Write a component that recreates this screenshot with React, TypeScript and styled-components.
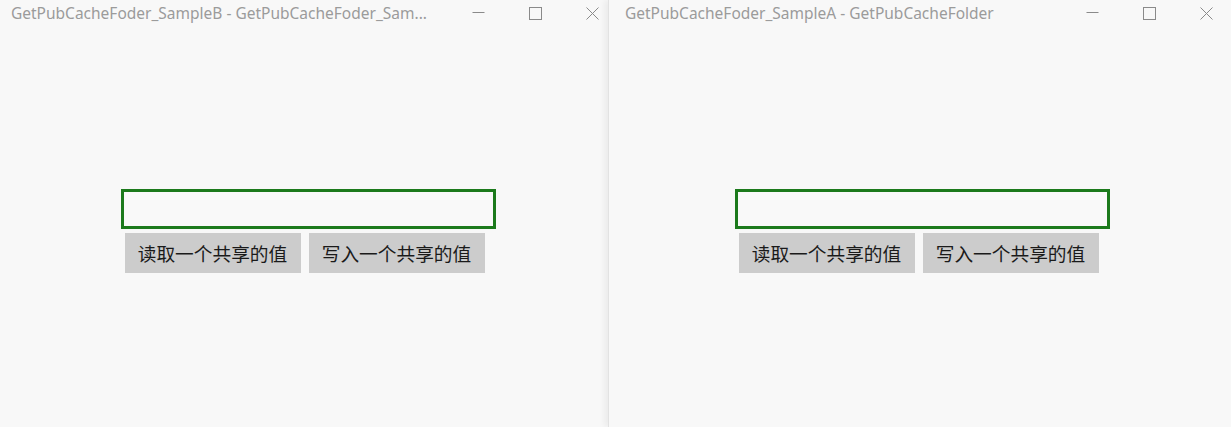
import React from "react";
import styled, { createGlobalStyle } from "styled-components";

const Global = createGlobalStyle`
  html, body { margin: 0; padding: 0; background: #f8f8f8; }
  body { width: 1231px; height: 427px; overflow: hidden; }
  #root { width: 1231px; height: 427px; }
`;

const Desktop = styled.div`
  display: flex;
  width: 1231px;
  height: 427px;
  overflow: hidden;
  background: #f8f8f8;
`;

const Window = styled.div<{ $front?: boolean }>`
  position: relative;
  box-sizing: border-box;
  flex: 0 0 auto;
  width: ${(p) => (p.$front ? "627px" : "621px")};
  height: 427px;
  display: flex;
  flex-direction: column;
  background: #f8f8f8;
  margin-right: ${(p) => (p.$front ? "0" : "-13px")};
  padding-left: ${(p) => (p.$front ? "5px" : "0")};
  z-index: ${(p) => (p.$front ? 1 : 0)};
  border-left: ${(p) => (p.$front ? "1px solid #e2e2e2" : "none")};
  box-shadow: ${(p) => (p.$front ? "-4px 0 6px rgba(0,0,0,0.05)" : "none")};
`;

const TitleBar = styled.div`
  display: flex;
  align-items: center;
  height: 32px;
  flex: 0 0 32px;
`;

const Title = styled.div`
  flex: 1;
  padding-left: 11px;
  font-family: "Noto Sans", "Open Sans", sans-serif;
  font-size: 15.5px;
  color: #9b9b9b;
  white-space: nowrap;
  line-height: 20px;
  margin-top: -6px;
`;

const Caption = styled.div`
  display: flex;
  height: 32px;
  align-items: flex-start;
`;

const CaptionButton = styled.div`
  width: 57px;
  height: 26px;
  display: flex;
  align-items: center;
  justify-content: center;
  color: #8a8a8a;
`;

const Content = styled.div`
  flex: 1;
  display: flex;
  align-items: center;
  justify-content: center;
  padding-right: 5px;
  padding-top: 3px;
`;

const Stack = styled.div`
  display: flex;
  flex-direction: column;
  align-items: flex-start;
  gap: 4px;
`;

const TextBox = styled.div`
  box-sizing: border-box;
  width: 375px;
  height: 40px;
  border: 3px solid #1c7a1c;
  background: #f9f9f9;
`;

const ButtonRow = styled.div`
  display: flex;
  gap: 8px;
  margin-left: 4px;
`;

const ActionButton = styled.div`
  box-sizing: border-box;
  width: 176px;
  height: 40px;
  background: #cccccc;
  display: flex;
  align-items: center;
  justify-content: center;
  font-family: "Noto Sans CJK SC", "Noto Sans", sans-serif;
  font-size: 18.7px;
  color: #1a1a1a;
  padding-bottom: 2px;
`;

const MinIcon = () => (
  <svg width="13" height="13" viewBox="0 0 13 13">
    <line x1="0.5" y1="5.5" x2="12.5" y2="5.5" stroke="currentColor" strokeWidth="1" />
  </svg>
);
const MaxIcon = () => (
  <svg width="13" height="13" viewBox="0 0 13 13">
    <rect x="0.5" y="0.5" width="12" height="12" fill="none" stroke="currentColor" strokeWidth="1" />
  </svg>
);
const CloseIcon = () => (
  <svg width="13" height="13" viewBox="0 0 13 13">
    <path d="M0.5 0.5 L12.5 12.5 M12.5 0.5 L0.5 12.5" stroke="currentColor" strokeWidth="1" fill="none" />
  </svg>
);

const AppWindow = ({ title, front }: { title: string; front?: boolean }) => (
  <Window $front={front}>
    <TitleBar>
      <Title>{title}</Title>
      <Caption>
        <CaptionButton><MinIcon /></CaptionButton>
        <CaptionButton><MaxIcon /></CaptionButton>
        <CaptionButton><CloseIcon /></CaptionButton>
      </Caption>
    </TitleBar>
    <Content>
      <Stack>
        <TextBox />
        <ButtonRow>
          <ActionButton>读取一个共享的值</ActionButton>
          <ActionButton>写入一个共享的值</ActionButton>
        </ButtonRow>
      </Stack>
    </Content>
  </Window>
);

export default function App() {
  return (
    <>
      <Global />
      <Desktop>
        <AppWindow title="GetPubCacheFoder_SampleB - GetPubCacheFoder_Sam..." />
        <AppWindow front title="GetPubCacheFoder_SampleA - GetPubCacheFolder" />
      </Desktop>
    </>
  );
}
